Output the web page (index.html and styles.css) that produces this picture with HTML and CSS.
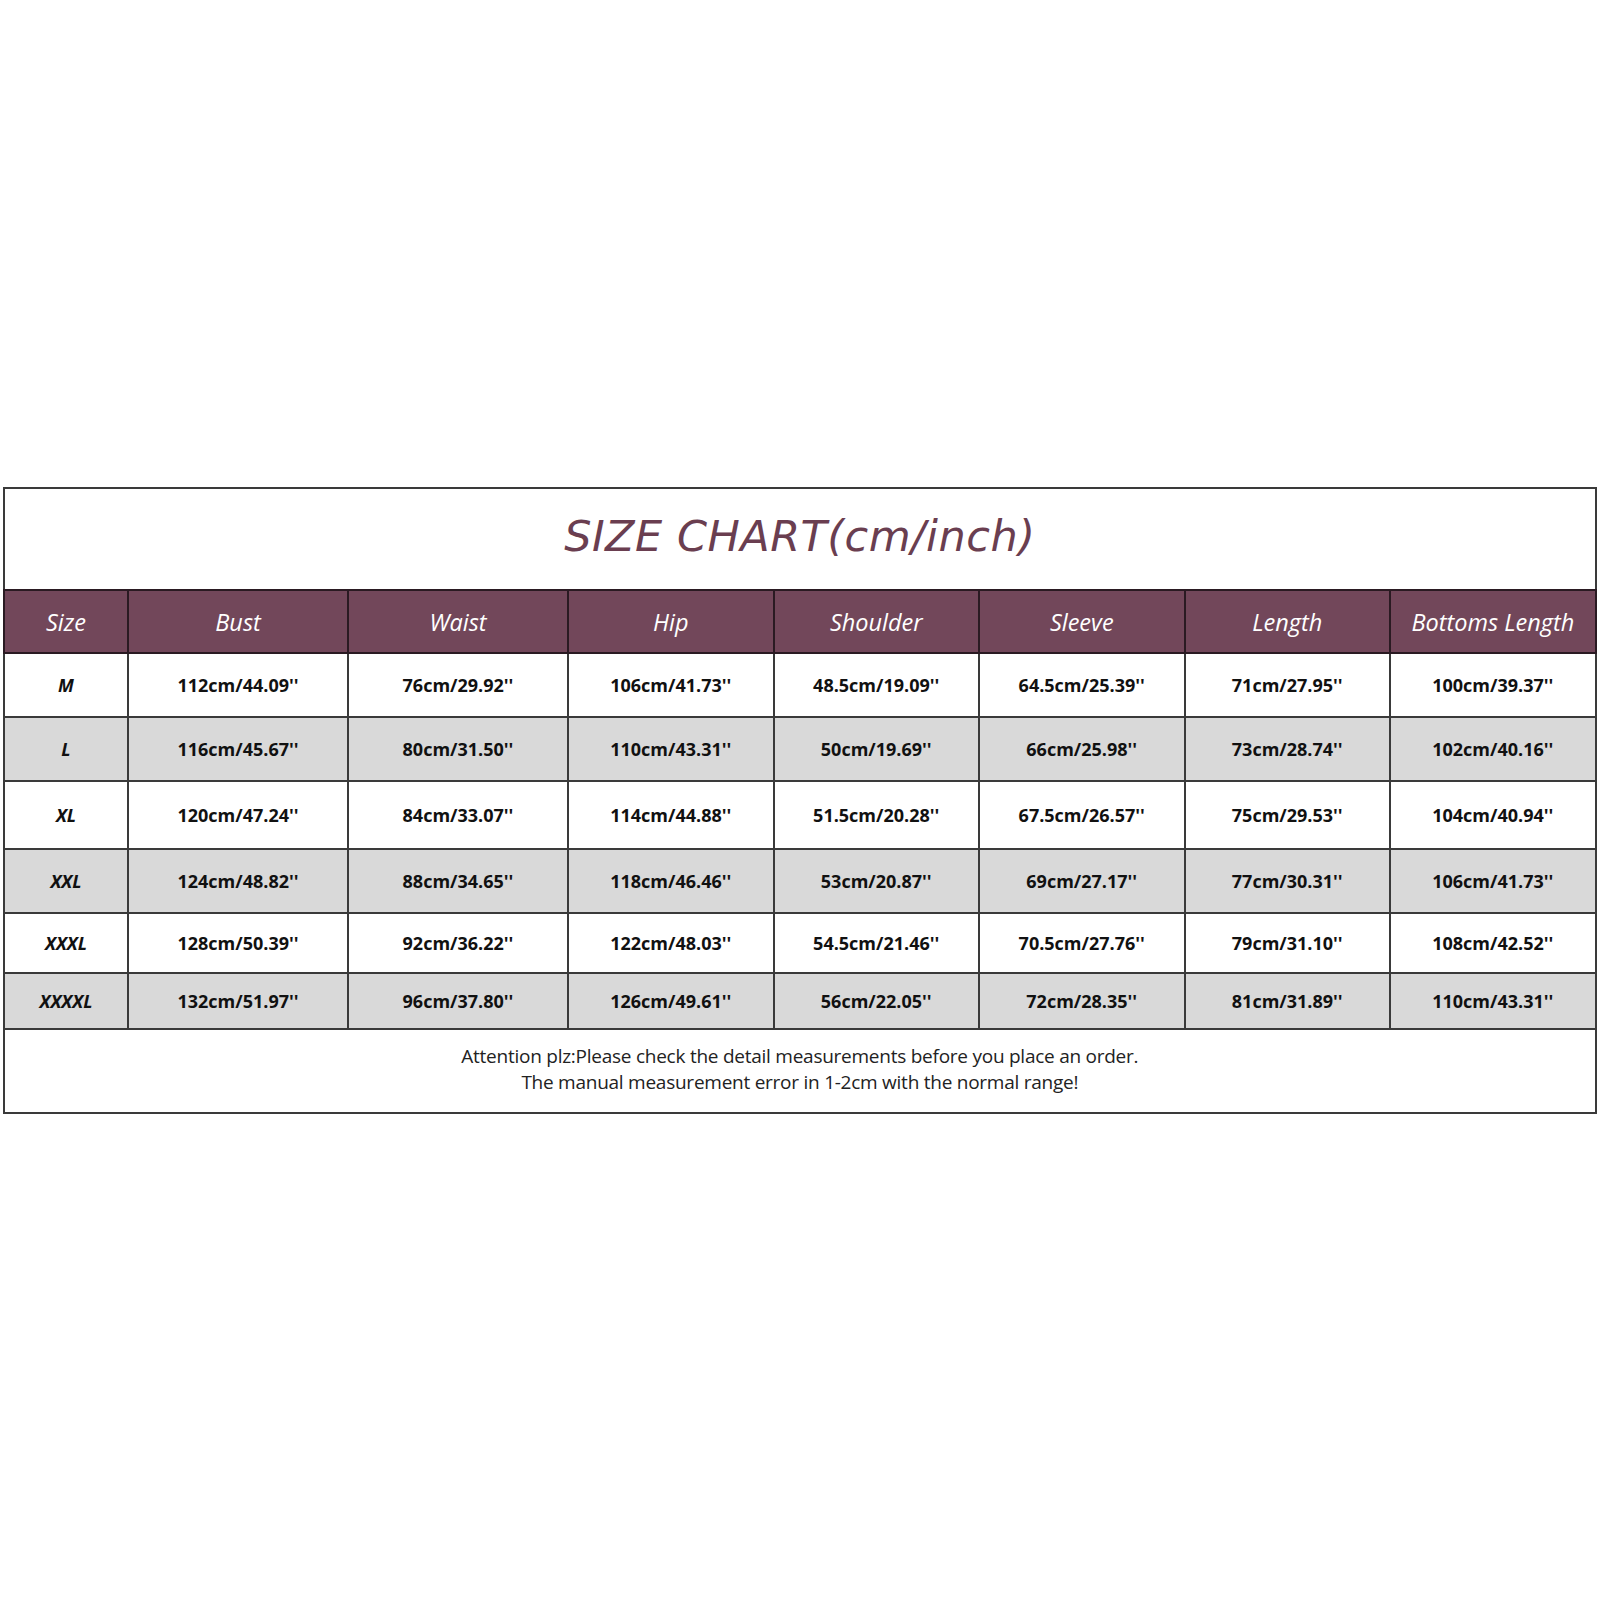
FILE: index.html
```html
<!DOCTYPE html>
<html>
<head>
<meta charset="utf-8">
<link rel="stylesheet" href="styles.css">
</head>
<body>
<div class="page">
  <table class="chart">
    <colgroup>
      <col class="c-size"><col class="c-wide"><col class="c-wide"><col class="c-n"><col class="c-n"><col class="c-n"><col class="c-n"><col class="c-n">
    </colgroup>
    <tr class="title-row"><td colspan="8"><span class="title">SIZE CHART(cm/inch)</span></td></tr>
    <tr class="head">
      <th>Size</th><th>Bust</th><th>Waist</th><th>Hip</th><th>Shoulder</th><th>Sleeve</th><th>Length</th><th>Bottoms Length</th>
    </tr>
    <tr class="r r1"><td class="sz">M</td><td>112cm/44.09''</td><td>76cm/29.92''</td><td>106cm/41.73''</td><td>48.5cm/19.09''</td><td>64.5cm/25.39''</td><td>71cm/27.95''</td><td>100cm/39.37''</td></tr>
    <tr class="r r2 alt"><td class="sz">L</td><td>116cm/45.67''</td><td>80cm/31.50''</td><td>110cm/43.31''</td><td>50cm/19.69''</td><td>66cm/25.98''</td><td>73cm/28.74''</td><td>102cm/40.16''</td></tr>
    <tr class="r r3"><td class="sz">XL</td><td>120cm/47.24''</td><td>84cm/33.07''</td><td>114cm/44.88''</td><td>51.5cm/20.28''</td><td>67.5cm/26.57''</td><td>75cm/29.53''</td><td>104cm/40.94''</td></tr>
    <tr class="r r4 alt"><td class="sz">XXL</td><td>124cm/48.82''</td><td>88cm/34.65''</td><td>118cm/46.46''</td><td>53cm/20.87''</td><td>69cm/27.17''</td><td>77cm/30.31''</td><td>106cm/41.73''</td></tr>
    <tr class="r r5"><td class="sz">XXXL</td><td>128cm/50.39''</td><td>92cm/36.22''</td><td>122cm/48.03''</td><td>54.5cm/21.46''</td><td>70.5cm/27.76''</td><td>79cm/31.10''</td><td>108cm/42.52''</td></tr>
    <tr class="r r6 alt"><td class="sz">XXXXL</td><td>132cm/51.97''</td><td>96cm/37.80''</td><td>126cm/49.61''</td><td>56cm/22.05''</td><td>72cm/28.35''</td><td>81cm/31.89''</td><td>110cm/43.31''</td></tr>
    <tr class="foot"><td colspan="8">Attention plz:Please check the detail measurements before you place an order.<br>The manual measurement error in 1-2cm with the normal range!</td></tr>
  </table>
</div>
</body>
</html>
```

FILE: styles.css
```css
html, body {
  margin: 0;
  padding: 0;
  background: #ffffff;
}
.page {
  width: 1600px;
  height: 1600px;
  padding: 487px 0 0 3px;
  box-sizing: border-box;
}
.chart {
  border-collapse: collapse;
  table-layout: fixed;
  width: 1593px;
  font-family: "Open Sans", "DejaVu Sans", sans-serif;
  color: #111111;
}
.c-size { width: 124px; }
.c-wide { width: 220px; }
.c-n { width: 205.5px; }
.chart td, .chart th {
  border: 2px solid #3a3a3a;
  padding: 0;
  text-align: center;
  vertical-align: middle;
}
.title-row td {
  height: 100px;
  border-bottom-color: #2a1a22;
}
.title {
  font-family: "DejaVu Sans", "Open Sans", sans-serif;
  font-style: italic;
  font-size: 43px;
  color: #6a3e50;
  letter-spacing: 0.5px;
  position: relative;
  top: -3px;
}
.head th {
  height: 61px;
  background: #72475a;
  color: #ffffff;
  font-style: italic;
  font-weight: 400;
  font-size: 23.5px;
  border-color: #2a1a22;
}
.r td {
  font-weight: 700;
  font-size: 18px;
}
.r .sz {
  font-style: italic;
}
.alt td {
  background: #d9d9d9;
}
.r1 td { height: 62px; }
.r2 td { height: 62px; }
.r3 td { height: 66px; }
.r4 td { height: 62px; }
.r5 td { height: 58px; }
.r6 td { height: 54px; }
.foot td {
  height: 84px;
  font-size: 19px;
  line-height: 26px;
  color: #222222;
  letter-spacing: -0.25px;
  padding-bottom: 4px;
  box-sizing: border-box;
}
```
